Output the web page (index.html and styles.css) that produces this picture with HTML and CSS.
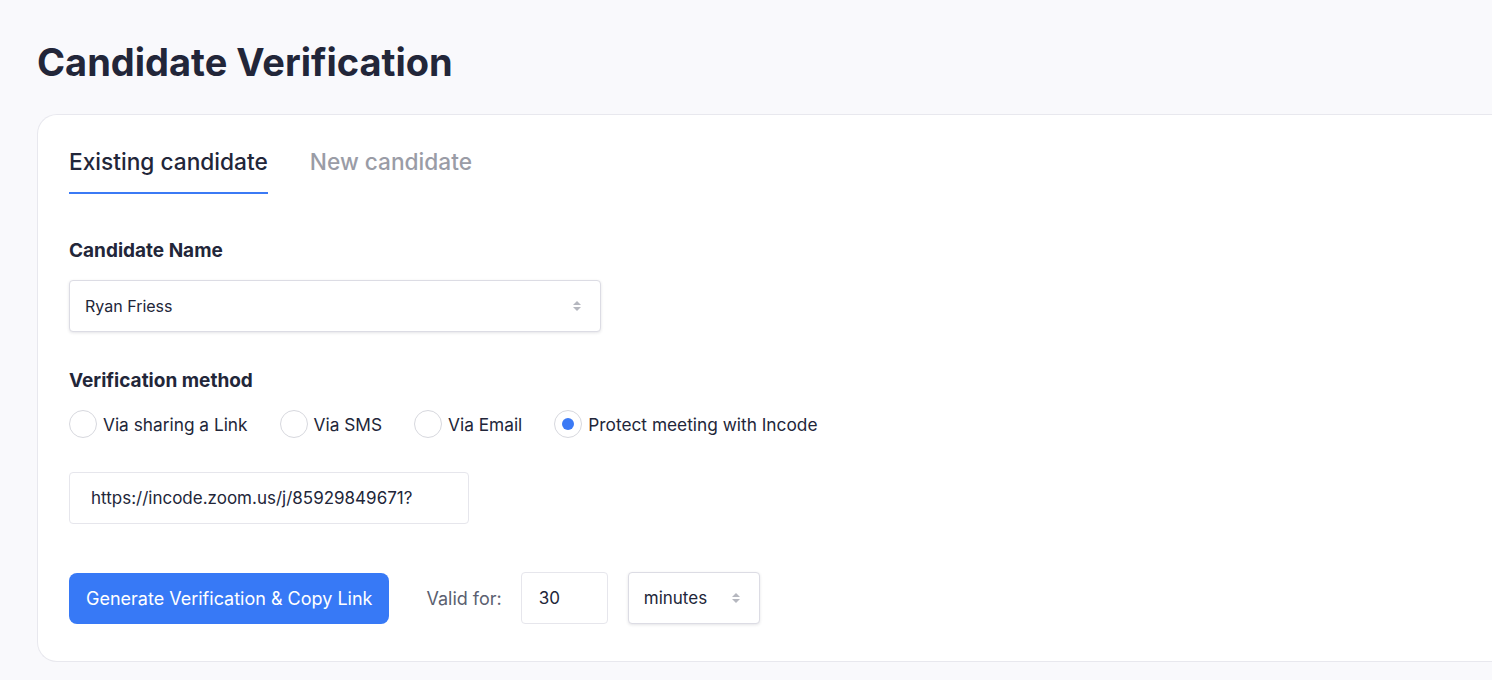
FILE: index.html
```html
<!DOCTYPE html>
<html lang="en">
<head>
  <meta charset="UTF-8">
  <meta name="viewport" content="width=device-width, initial-scale=1.0">
  <title>Candidate Verification</title>
  <link rel="stylesheet" href="styles.css">
</head>
<body>
  <div class="page">
    <h1 class="page-title">Candidate Verification</h1>

    <div class="card">
      <div class="tabs">
        <div class="tab active">Existing candidate</div>
        <div class="tab">New candidate</div>
      </div>

      <div class="field">
        <label class="field-label">Candidate Name</label>
        <div class="select name-select">
          <span>Ryan Friess</span>
          <svg class="arrows" width="10" height="16" viewBox="0 0 10 16">
            <path d="M5 3 L9 7 H1 Z" fill="#b5b7bf"/>
            <path d="M5 13 L9 9 H1 Z" fill="#b5b7bf"/>
          </svg>
        </div>
      </div>

      <div class="field">
        <label class="field-label">Verification method</label>
        <div class="radios">
          <label class="radio"><span class="dot"></span>Via sharing a Link</label>
          <label class="radio"><span class="dot"></span>Via SMS</label>
          <label class="radio"><span class="dot"></span>Via Email</label>
          <label class="radio checked"><span class="dot"></span>Protect meeting with Incode</label>
        </div>
      </div>

      <div class="input link-input">https://incode.zoom.us/j/85929849671?</div>

      <div class="actions">
        <button class="btn-primary">Generate Verification &amp; Copy Link</button>
        <span class="valid-label">Valid for:</span>
        <div class="input num-input">30</div>
        <div class="select unit-select">
          <span>minutes</span>
          <svg class="arrows" width="10" height="16" viewBox="0 0 10 16">
            <path d="M5 3 L9 7 H1 Z" fill="#b5b7bf"/>
            <path d="M5 13 L9 9 H1 Z" fill="#b5b7bf"/>
          </svg>
        </div>
      </div>
    </div>
  </div>
</body>
</html>
```

FILE: styles.css
```css
body {
  margin: 0;
  padding: 0;
  background: #f9f9fc;
  font-family: Inter, "Noto Sans", sans-serif;
  color: #222639;
}
.page {
  padding: 38px 0 0 37px;
}
.page-title {
  margin: 0 0 28px 0;
  font-size: 38px;
  font-weight: 700;
  line-height: 48px;
}
.card {
  background: #fff;
  border: 1px solid #e8e8ee;
  border-right: none;
  border-radius: 20px 0 0 20px;
  padding: 32px 0 36px 31px;
  height: 478px;
}
.tabs {
  display: flex;
  gap: 42px;
}
.tab {
  font-size: 22.7px;
  font-weight: 500;
  line-height: 30px;
  padding-bottom: 15px;
  color: #9a9ca6;
  border-bottom: 2px solid transparent;
}
.tab.active {
  color: #222639;
  border-bottom-color: #3b7af5;
}
.field {
  margin-top: 44px;
}
.field + .field {
  margin-top: 36px;
}
.field-label {
  display: block;
  font-size: 19px;
  font-weight: 700;
  line-height: 26px;
  margin-bottom: 16px;
}
.select,
.input {
  box-sizing: border-box;
  display: flex;
  align-items: center;
  height: 52px;
  background: #fff;
  border: 1px solid #e6e6ec;
  border-radius: 4px;
  font-size: 16px;
}
.select {
  justify-content: space-between;
  border-color: #dcdce4;
  box-shadow: 0 1px 3px rgba(30, 35, 60, 0.12);
}
.name-select {
  width: 532px;
  padding: 0 18px 0 15px;
}
.radios {
  display: flex;
  gap: 32px;
  margin-top: 3px;
}
.radio {
  display: flex;
  align-items: center;
  gap: 6px;
  font-size: 17.3px;
}
.dot {
  box-sizing: border-box;
  width: 28px;
  height: 28px;
  border: 1px solid #d7d8de;
  border-radius: 50%;
  display: flex;
  align-items: center;
  justify-content: center;
}
.radio.checked .dot::after {
  content: "";
  width: 12px;
  height: 12px;
  border-radius: 50%;
  background: #3b7af5;
}
.link-input {
  width: 400px;
  margin-top: 34px;
  padding-left: 21px;
  font-size: 17px;
}
.actions {
  display: flex;
  align-items: center;
  margin-top: 48px;
}
.btn-primary {
  height: 51px;
  padding: 0 17px;
  border: none;
  border-radius: 8px;
  background: #3779f6;
  color: #fff;
  font-family: inherit;
  font-size: 18px;
}
.valid-label {
  margin: 0 19px 0 37px;
  font-size: 18px;
  color: #5b5f70;
}
.num-input {
  width: 87px;
  padding-left: 17px;
  font-size: 17px;
}
.unit-select {
  width: 132px;
  margin-left: 20px;
  padding: 0 18px 0 15px;
  font-size: 17px;
}
```
